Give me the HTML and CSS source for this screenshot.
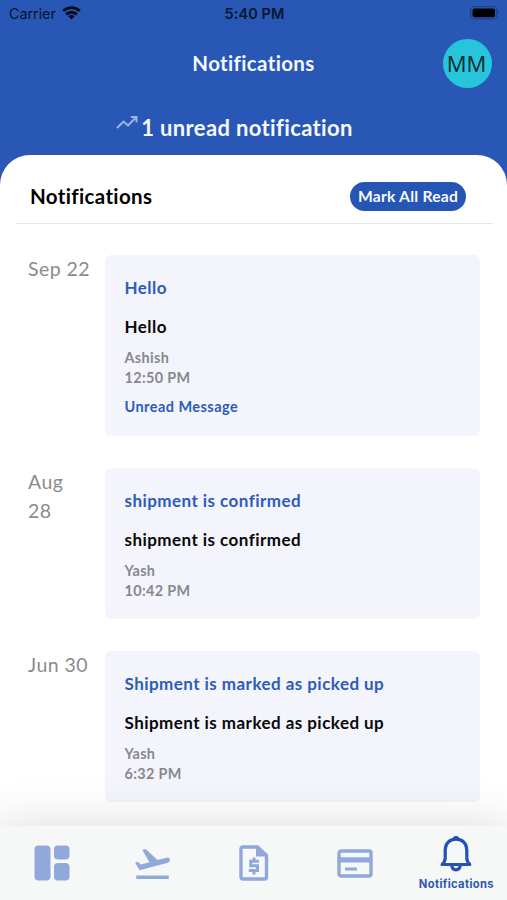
FILE: index.html
```html
<!DOCTYPE html>
<html lang="en">
<head>
<meta charset="utf-8">
<title>Notifications</title>
<link rel="stylesheet" href="styles.css">
</head>
<body>
<div class="app">
  <div class="status">
    <div class="carrier"><span>Carrier</span>
      <svg class="wifi" width="19" height="14" viewBox="0 0 19 14"><g fill="none" stroke="#050b18" stroke-width="2.900"><path d="M1.200 5.100a11.700 11.700 0 0 1 16.600 0"/><path d="M4.200 8.400a7.500 7.500 0 0 1 10.600 0"/></g><path d="M9.500 13.600l-3.100-3.300a4.400 4.400 0 0 1 6.200 0z" fill="#050b18"/></svg>
    </div>
    <span class="clock">5:40 PM</span>
    <svg class="battery" width="30" height="14" viewBox="0 0 30 14"><rect x=".7" y=".7" width="26" height="12.200" rx="3.500" fill="none" stroke="#1d4287" stroke-width="1.300"/><rect x="2.500" y="2.500" width="22.500" height="8.800" rx="2" fill="#000"/><path d="M28 4.500q2.200 2.200 0 4.600z" fill="#1d4287"/></svg>
  </div>
  <header class="header">
    <h1>Notifications</h1>
    <div class="avatar">MM</div>
  </header>
  <div class="summary">
    <svg width="22" height="15" viewBox="0 0 22 15" fill="none" stroke="#a0b6e2" stroke-width="1.900"><path d="M1 13l6.500-6.500 4.500 4L20 2.500M15 2h5.500v5.200"/></svg>
    <span>1 unread notification</span>
  </div>
  <main class="sheet">
    <div class="sheet-head"><h2>Notifications</h2><button class="mark">Mark All Read</button></div>
    <div class="list">
      <article class="row"><time class="date">Sep 22</time><div class="card">
        <h3>Hello</h3><p class="body">Hello</p><p class="meta">Ashish</p><p class="meta">12:50 PM</p><p class="unread">Unread Message</p></div></article>
      <article class="row"><time class="date">Aug<br>28</time><div class="card">
        <h3>shipment is confirmed</h3><p class="body">shipment is confirmed</p><p class="meta">Yash</p><p class="meta">10:42 PM</p></div></article>
      <article class="row"><time class="date">Jun 30</time><div class="card">
        <h3>Shipment is marked as picked up</h3><p class="body">Shipment is marked as picked up</p><p class="meta">Yash</p><p class="meta">6:32 PM</p></div></article>
    </div>
  </main>
  <nav class="tabs">
    <a class="tab"><svg width="36" height="36" viewBox="0 0 36 36" fill="#91a8db"><rect x=".5" y=".5" width="16" height="35" rx="4"/><rect x="20" y=".5" width="15.500" height="14" rx="4"/><rect x="20" y="18" width="15.500" height="17.500" rx="4"/></svg></a>
    <a class="tab"><svg width="41" height="41" viewBox="0 0 24 24" fill="#91a8db"><path d="M2.500 19h19v2h-19zM22.070 9.640c-.21-.8-1.040-1.280-1.840-1.060L14.920 10l-6.900-6.430-1.930.51 4.140 7.170-4.970 1.330-1.970-1.540-1.450.39 2.590 4.490L21 11.490c.81-.23 1.280-1.050 1.070-1.850z"/></svg></a>
    <a class="tab"><svg width="30" height="36" viewBox="0 0 30 36"><path d="M4 2h14.500L27.500 10.500V32q0 2-2 2H4q-2 0-2-2V4q0-2 2-2z" fill="none" stroke="#91a8db" stroke-width="3.400"/><path d="M17 2v9.500h10z" fill="#91a8db"/><path d="M20 16.200h-8.300v4.500h6.800v4.800H9.800M15 12.500v3m0 10v4" fill="none" stroke="#91a8db" stroke-width="3"/></svg></a>
    <a class="tab"><svg width="36" height="29" viewBox="0 0 36 29"><rect x="2" y="2" width="32" height="25" rx="2" fill="none" stroke="#91a8db" stroke-width="3.400"/><path d="M2 8.200h32v5.300H2zM8 18.500h12v3H8z" fill="#91a8db"/></svg></a>
    <a class="tab active"><svg width="32" height="36" viewBox="0 0 32 36" fill="none" stroke="#2353b3" stroke-width="3.200"><path d="M16 3.200C9 3.200 5.200 8 5.200 14v8q0 3.500-3 6.500h27.600q-3-3-3-6.500V14c0-6-3.800-10.800-10.800-10.800z" stroke-linejoin="round"/><path d="M11.800 29.500q.5 4.300 4.200 4.300t4.200-4.300M14 2.500q2-2 4 0"/></svg><span>Notifications</span></a>
  </nav>
</div>
</body>
</html>
```
FILE: styles.css
```css
* { box-sizing: border-box; }
body { margin: 0; background: #2857b5; font-family: Lato, "Noto Sans", sans-serif; }
h1, h2, h3, p { margin: 0; }
.app { width: 507px; height: 900px; overflow: hidden; display: flex; flex-direction: column; }
.status { height: 27px; display: grid; grid-template-columns: 1fr auto 1fr; align-items: center; padding: 0 7px 0 9px; font: 14.500px/27px Inter, sans-serif; color: #0a152e; }
.carrier { display: flex; align-items: center; gap: 6px; letter-spacing: -.1px; }
.wifi { margin-top: -2px; }
.clock { font-weight: 600; letter-spacing: .1px; }
.battery { justify-self: end; margin-top: -1px; }
.header { height: 72px; padding: 0 15px 0 64px; display: flex; align-items: center; color: #f5f8ff; }
h1 { flex: 1; text-align: center; font-size: 20.500px; line-height: 28px; letter-spacing: .35px; }
.avatar { width: 49px; height: 49px; border-radius: 50%; background: #27c5da; color: #08272d; font: 22px/49px "Open Sans", sans-serif; text-align: center; padding-right: 2px; }
.summary { height: 56px; display: flex; justify-content: center; gap: 3px; padding: 14px 38px 0 0; color: #f5f8ff; font-size: 22px; line-height: 30px; font-weight: 700; letter-spacing: .36px; }
.summary svg { margin-top: 2px; }
.sheet { height: 671px; flex: none; background: #fff; border-radius: 30px 30px 0 0; padding: 0 14px 0 16px; }
.sheet-head { height: 69px; display: flex; align-items: center; justify-content: space-between; padding: 14px 27px 0 14px; border-bottom: 1px solid #e6e6e8; }
h2 { font-size: 20.500px; line-height: 28px; letter-spacing: .35px; }
.mark { width: 116px; height: 29px; border: 0; padding: 0; border-radius: 15px; background: #2555b5; color: #f5f8ff; font: 700 15.700px/29px Lato, sans-serif; letter-spacing: .2px; }
.list { display: flex; flex-direction: column; gap: 32px; padding: 31px 12px 0; }
.row { display: grid; grid-template-columns: 77px 375px; }
.date { color: #8b8b8d; font-size: 19.500px; line-height: 29px; letter-spacing: .45px; margin-top: -1px; }
.card { background: #f3f4fc; border-radius: 6px; padding: 20px 19.500px 19px; }
h3, .body { font-size: 17px; line-height: 25px; font-weight: 700; letter-spacing: .45px; }
h3 { color: #2d5cb8; margin-bottom: 14px; }
.body { color: #090909; margin-bottom: 9px; }
.meta { color: #88888b; font-size: 14.400px; line-height: 19.500px; font-weight: 700; letter-spacing: .35px; }
.unread { color: #2d5cb8; font-size: 14.500px; line-height: 20px; font-weight: 700; letter-spacing: .45px; margin-top: 10px; }
.tabs { position: relative; height: 74px; flex: none; padding-left: 1px; background: #f6f7f7; box-shadow: 0 12px 56px 4px rgba(0, 0, 0, .2); display: grid; grid-template-columns: repeat(5, 1fr); }
.tab { display: flex; flex-direction: column; align-items: center; justify-content: center; }
.active { gap: 5px; justify-content: flex-start; padding-top: 10px; color: #2d58b2; font: 700 11.200px/14px Inter, sans-serif; letter-spacing: .35px; }
```
